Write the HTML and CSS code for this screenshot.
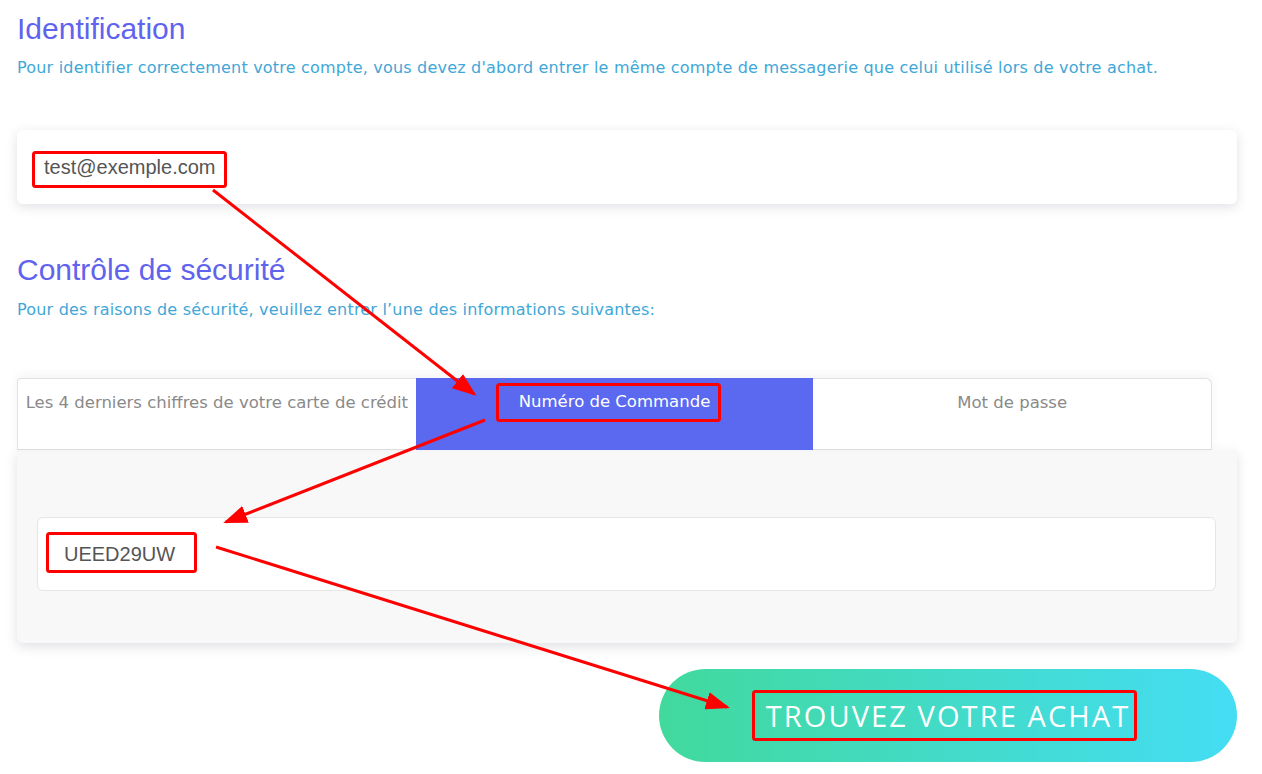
FILE: index.html
```html
<!DOCTYPE html>
<html lang="fr">
<head>
    <meta charset="UTF-8">
    <meta name="viewport" content="width=device-width, initial-scale=1.0">
    <title>Identification</title>
    <link rel="stylesheet" href="styles.css">
</head>
<body>
    <div class="page">
        <h1 class="title">Identification</h1>
        <p class="hint">Pour identifier correctement votre compte, vous devez d'abord entrer le même compte de messagerie que celui utilisé lors de votre achat.</p>

        <div class="card field">
            <span class="value">test@exemple.com</span>
        </div>

        <h2 class="title second">Contrôle de sécurité</h2>
        <p class="hint second">Pour des raisons de sécurité, veuillez entrer l’une des informations suivantes:</p>

        <div class="tabs">
            <div class="tab">Les 4 derniers chiffres de votre carte de crédit</div>
            <div class="tab active">Numéro de Commande</div>
            <div class="tab last">Mot de passe</div>
        </div>
        <div class="panel">
            <div class="field inner">
                <span class="value">UEED29UW</span>
            </div>
        </div>

        <div class="actions">
            <button class="submit">TROUVEZ VOTRE ACHAT</button>
        </div>
    </div>

    <!-- annotations -->
    <svg class="notes" width="1262" height="774" viewBox="0 0 1262 774">
        <defs>
            <marker id="head" markerWidth="8" markerHeight="6" refX="7" refY="3" orient="auto" markerUnits="strokeWidth">
                <path d="M0,0 L8,3 L0,6 z" fill="#f00"/>
            </marker>
        </defs>
        <g fill="none" stroke="#f00" stroke-width="3">
            <rect x="33.5" y="152.5" width="192" height="34" rx="2"/>
            <rect x="497.5" y="384.5" width="222" height="36" rx="2"/>
            <rect x="47.5" y="533.5" width="148" height="38" rx="2"/>
            <rect x="753.5" y="691.5" width="382" height="48" rx="2"/>
            <line x1="213" y1="190" x2="474" y2="394" marker-end="url(#head)"/>
            <line x1="485" y1="420" x2="226" y2="522" marker-end="url(#head)"/>
            <line x1="216" y1="547" x2="727" y2="707" marker-end="url(#head)"/>
        </g>
    </svg>
</body>
</html>
```

FILE: styles.css
```css
body {
    margin: 0;
    background: #fff;
    font-family: "DejaVu Sans", sans-serif;
    position: relative;
}
.page {
    width: 1220px;
    padding: 12px 0 0 17px;
}
.title {
    margin: 0;
    font-family: "Liberation Sans", Arial, sans-serif;
    font-weight: normal;
    font-size: 30px;
    line-height: 34px;
    color: #5f63ee;
}
.title.second {
    margin-top: 49px;
}
.hint {
    margin: 10px 0 0;
    font-size: 16px;
    line-height: 24px;
    letter-spacing: 0.2px;
    color: #41a7d7;
}
.hint.second {
    margin-top: 11px;
}
.field {
    display: flex;
    align-items: center;
    height: 74px;
    box-sizing: border-box;
    background: #fff;
    border-radius: 6px;
}
.card {
    margin-top: 50px;
    padding-left: 27px;
    box-shadow: 0 3px 12px rgba(60, 70, 90, 0.16);
}
.value {
    font-family: "Liberation Sans", Arial, sans-serif;
    font-size: 20px;
    color: #555;
}
.tabs {
    display: flex;
    width: 1195px;
    margin-top: 56px;
    height: 72px;
    box-sizing: border-box;
    border: 1px solid #e2e2e2;
    border-bottom-color: #ddd;
    border-radius: 4px 6px 0 0;
    box-shadow: 0 -3px 8px rgba(60, 70, 90, 0.06);
    background: #fff;
    position: relative;
    z-index: 1;
}
.tab {
    flex: 1;
    text-align: center;
    padding-top: 12px;
    font-size: 16.5px;
    line-height: 24px;
    color: #8a8a8a;
    white-space: nowrap;
}
.tab.active {
    background: #5a69ef;
    color: #fff;
    margin: -1px 0;
}
.panel {
    background: #f8f8f9;
    padding: 67px 21px 52px 20px;
    border-radius: 0 0 6px 6px;
    box-shadow: 0 4px 12px rgba(60, 70, 90, 0.16);
}
.inner {
    border: 1px solid #e6e6e6;
    padding-left: 26px;
}
.actions {
    display: flex;
    justify-content: flex-end;
    margin-top: 26px;
}
.submit {
    width: 578px;
    height: 93px;
    border: none;
    border-radius: 47px;
    background: linear-gradient(90deg, #41d99c, #44ddf4);
    color: #fff;
    font-family: "Open Sans", sans-serif;
    font-size: 29px;
    letter-spacing: 2.1px;
    padding: 0;
    cursor: pointer;
}
.notes {
    position: absolute;
    top: 0;
    left: 0;
    z-index: 2;
    pointer-events: none;
}
```
